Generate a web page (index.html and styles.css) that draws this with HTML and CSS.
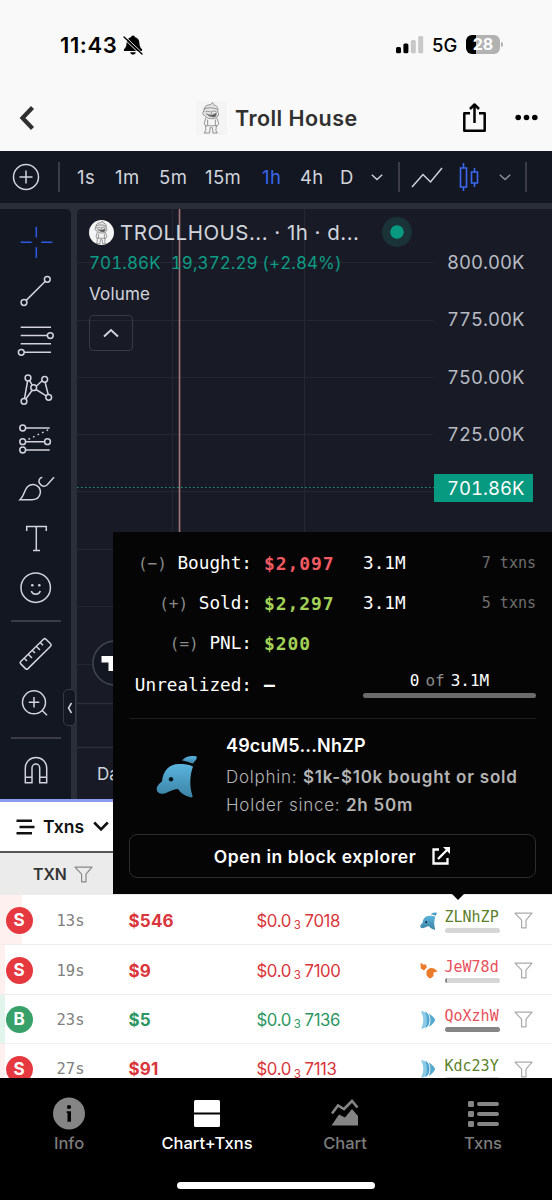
FILE: index.html
```html
<!DOCTYPE html>
<html lang="en">
<head>
    <meta charset="UTF-8">
    <meta name="viewport" content="width=device-width, initial-scale=1.0">
    <title>Troll House</title>
    <link rel="stylesheet" href="styles.css">
</head>
<body>

<!-- shared icons -->
<svg class="defs" width="0" height="0">
    <linearGradient id="sea" x1="0" y1="0" x2="0" y2="1">
        <stop offset="0" stop-color="#5ab4dd"/>
        <stop offset="1" stop-color="#3c82a5"/>
    </linearGradient>
    <symbol id="funnel" viewBox="0 0 19 17">
        <path d="M1 1.200H18L12 8.200V15.800H7.600V8.200Z" fill="none" stroke="currentColor" stroke-width="1.200" stroke-linejoin="round"/>
    </symbol>
    <symbol id="dolphin" viewBox="0 0 41 43">
        <path d="M.7 34.500C.5 31 3.500 28.500 6 26.500C7 16 13 9 23 9C28.500 9 33.500 9.500 37 11.500C33.500 21 33.500 32 36.500 40.500C36.800 42.500 35.500 43 33.500 42C28.500 40.500 24.500 38 22 34C16 34 11.500 38.500 6.500 38.700C3 38.800 .8 37 .7 34.500Z"/>
        <path d="M26 5.500C29 1.500 35 .3 40 1.300C41 1.800 41 3.200 40.200 4.500L37.500 8C36.500 9 34.500 8 33 7.300C31 6.300 28.500 6 26 5.500Z"/>
        <circle class="eye" cx="15" cy="24.300" r="2.200"/>
    </symbol>
    <symbol id="fish" viewBox="0 0 16 20">
        <path d="M1 1.500C4 .5 7 3 7.500 10C7 16.500 4.500 19 1 18.500C4 13 4 7 1 1.500Z" fill="#8ccbe6"/>
        <path d="M5 1.500C8.200 3 9.600 6 9.600 10C9.600 14 8 17 5 18.500C7.500 13 7.500 7 5 1.500Z" fill="#4fa6d2"/>
        <path d="M8.800 3.500C12 5.500 14.500 8 15.200 10C14 13 12 15 8.800 16.800C11 12 11 8 8.800 3.500Z" fill="#55a9cf"/>
    </symbol>
    <symbol id="shrimp" viewBox="0 0 18 17">
        <path d="M.5.5L3 2.500L6 2.500L6.800 5.500L4 8.500L.8 6.500Z" fill="#e97b2b"/>
        <path d="M6.500 9.500C8 5 14 4.500 17.500 9.500L13.500 10.500L13.500 14L10.500 16.500C7.500 15.500 5.800 13 6.500 9.500Z" fill="#e97b2b"/>
    </symbol>
    <symbol id="troll" viewBox="0 0 32 34">
        <g fill="none" stroke="currentColor" stroke-width=".8" stroke-linecap="round" stroke-linejoin="round">
            <path d="M8 10C8.500 5 11 3 15 3.500L17 1L19 4C22 4 23 7 22.500 11C24 13 23.500 15 21.500 16C18 19 12 18 9 14.500C6.500 14 6.500 11 8 10Z" fill="#e6e6e6"/>
            <path d="M8.500 7.500C12 6 18 6 22 8M10 10.500Q12 9 14 10.500M17 10Q19 9 21 10.500M15.500 10L16 12.500"/>
            <path d="M11 13Q16 15.500 21 12Q21 16 18 16Q14 16 11 13Z" fill="#555"/>
            <path d="M10 17L8.500 23L10 25H22L23.500 23L21.500 17M10 25V30L8.500 32.500H14L14.500 27H17L17.500 32.500H22L20.500 30L21 25"/>
            <path d="M12 19V24M20 19V24"/>
        </g>
    </symbol>
</svg>

<div class="phone">
    <div class="status-bar">
        <span class="clock">11:43</span>
        <svg class="bell" width="20" height="20" viewBox="0 0 20 20">
            <path d="M10 .5C8.700.5 8.300 1.300 8.200 2C5 3 3.700 5 3.600 8C3.500 11 2.800 12.500 1 14.300C.6 15 1 15.900 1.800 15.900H18.200C19 15.900 19.400 15 19 14.300C17.200 12.500 16.500 11 16.400 8C16.300 5 15 3 11.800 2C11.700 1.300 11.300.5 10 .5ZM7.200 17.200H12.800C12.400 20.300 7.600 20.300 7.200 17.200Z"/>
            <path d="M.2 3L17.800 20M1.800 1.200L19.600 18.200" stroke="#f9f9f9" stroke-width="1"/>
            <path d="M1 2L19 19" stroke="#000" stroke-width="1.400" stroke-linecap="round"/>
        </svg>
        <span class="spacer"></span>
        <svg class="signal" width="28" height="18" viewBox="0 0 28 18">
            <rect x="0" y="11" width="5" height="6.300" rx="1.500"/>
            <rect x="7.400" y="7.500" width="5" height="9.800" rx="1.500"/>
            <rect x="14.800" y="4" width="5" height="13.300" rx="1.500" fill="#c8c8c8"/>
            <rect x="22.200" y="0" width="5" height="17.300" rx="1.500" fill="#c8c8c8"/>
        </svg>
        <span class="network">5G</span>
        <span class="battery">28</span>
    </div>

    <header class="title-bar">
        <svg class="back" width="16" height="24" viewBox="0 0 16 24" fill="none" stroke="#2f2f2f" stroke-width="4.200">
            <path d="M13.500 1.500L3.500 12L13.500 22.500"/>
        </svg>
        <div class="title">
            <svg class="title-logo" width="31" height="34"><use href="#troll"/></svg>
            <h1>Troll House</h1>
        </div>
        <svg class="share" width="25" height="31" viewBox="0 0 25 31" fill="none" stroke="#000" stroke-width="2.500" stroke-linejoin="round">
            <path d="M8 11.300H2.300V28.700H22.700V11.300H17M12.500 21V3M8 7L12.500 2.500L17 7"/>
        </svg>
        <svg class="dots" width="23" height="7" viewBox="0 0 23 7">
            <circle cx="3.200" cy="3.500" r="2.800"/><circle cx="11.500" cy="3.500" r="2.800"/><circle cx="19.800" cy="3.500" r="2.800"/>
        </svg>
    </header>

    <section class="chart">
        <div class="intervals">
            <svg width="28" height="28" viewBox="0 0 28 28" fill="none" stroke="#d1d4dc" stroke-width="1.500">
                <circle cx="14" cy="14" r="12.500"/><path d="M14 7.500V20.500M7.500 14H20.500"/>
            </svg>
            <i></i>
            <span>1s</span>
            <span>1m</span>
            <span>5m</span>
            <span>15m</span>
            <span class="active">1h</span>
            <span>4h</span>
            <span>D</span>
            <svg width="12" height="7" viewBox="0 0 12 7" fill="none" stroke="#d1d4dc" stroke-width="1.400"><path d="M.8.8L6 5.500L11.200.8"/></svg>
            <i></i>
            <svg width="32" height="22" viewBox="0 0 32 22" fill="none" stroke="#d1d4dc" stroke-width="1.500"><path d="M1 21L12 8.500L19.500 16L31 2"/></svg>
            <svg width="22" height="30" viewBox="0 0 22 30" fill="none" stroke="#3a67f0" stroke-width="1.600">
                <path d="M2.500 6H8.500V25H2.500ZM5.500 1V6M5.500 25V29M13.500 10H19.500V21H13.500ZM16.500 6V10M16.500 21V25"/>
            </svg>
            <svg width="12" height="7" viewBox="0 0 12 7" fill="none" stroke="#8d9098" stroke-width="1.400"><path d="M.8.8L6 5.500L11.200.8"/></svg>
            <i></i>
        </div>

        <div class="workspace">
            <div class="tools">
                <svg class="cross" viewBox="0 0 40 40"><path d="M4.700 20.300H15.700M25.300 20.300H36.300M20.300 4.700V15.500M20.300 25.300V36"/></svg>
                <svg viewBox="0 0 40 40"><path d="M10.200 29.400L29.100 10.500"/><circle cx="8" cy="31.500" r="2.900"/><circle cx="31.300" cy="8.300" r="2.900"/></svg>
                <svg viewBox="0 0 40 40"><path d="M4.700 6.300H35M4.700 14.600H31.400M4.700 22.700H35M8.300 31.300H35"/><circle cx="34.300" cy="14.600" r="2.900"/><circle cx="5.300" cy="31.300" r="2.900"/></svg>
                <svg viewBox="0 0 40 40"><path d="M8.500 28.500L11.600 11M13.500 10.500L16.300 15.200M20.200 16.200L26.200 10.800M29.100 12.200L32.200 24.500M9.800 29L16.200 20.200M20 19.500L30.200 25.800"/><circle cx="12" cy="8" r="2.900"/><circle cx="28.700" cy="9.300" r="2.900"/><circle cx="17.700" cy="17.700" r="2.900"/><circle cx="8" cy="31.300" r="2.900"/><circle cx="32.700" cy="27.300" r="2.900"/></svg>
                <svg viewBox="0 0 40 40"><path d="M9.600 9H33.700M9.600 22.700H28.600M9.600 31H33.700"/><path d="M12.500 20.200L33 10.500" stroke-dasharray="1.700 3.300"/><circle cx="6.700" cy="9" r="2.900"/><circle cx="6.700" cy="22.700" r="2.900"/><circle cx="31.500" cy="22.700" r="2.900"/><circle cx="6.700" cy="31" r="2.900"/></svg>
                <svg viewBox="0 0 40 40"><path d="M4 31.700C9 27 8 22 11.500 18.800C15 15.500 20 15.800 23 19.500C26 24 24 31.700 16 31.700ZM26.300 9.300C23 10 22.300 13 23.500 15.200C25.500 18 28 19.500 31 17L38 9.300"/></svg>
                <svg viewBox="0 0 40 40"><path d="M10.700 13V8.500H30.300V13M20.300 8.500V32.500M17 32.500H24"/></svg>
                <svg viewBox="0 0 40 40"><circle cx="19.700" cy="20.700" r="14.700"/><path d="M15.300 24C16.500 28.200 23 28.200 24.300 24"/><circle class="dot" cx="16.300" cy="18.300" r="1.300"/><circle class="dot" cx="23.300" cy="18.300" r="1.300"/></svg>
                <hr>
                <svg viewBox="0 0 40 40"><path d="M27.500 5.200Q28.700 4 30 5.200L34.600 9.800Q35.800 11 34.600 12.300L12 34.600Q10.700 35.800 9.500 34.600L4.800 29.900Q3.600 28.700 4.800 27.500ZM8.200 24.200L11 27M12.200 20.200L16 24M16.200 16.300L19 19M20.200 12.300L24 16M24.200 8.500L27 11.300"/></svg>
                <svg viewBox="0 0 40 40"><circle cx="18" cy="18.300" r="11.500"/><path d="M18 13V23.600M12.700 18.300H23.300M26.200 26.500L31 31.300"/></svg>
                <hr>
                <svg viewBox="0 0 40 40"><path d="M9.300 31.800V17A10.700 10.500 0 0 1 30.700 17V31.800H23.700V17A3.850 4 0 0 0 16 17V31.800ZM9.300 26.200H16M23.700 26.200H30.700"/></svg>
            </div>
            <div class="collapse">
                <svg width="6" height="12" viewBox="0 0 6 12" fill="none" stroke="#d1d4dc" stroke-width="1.500"><path d="M4.500 1L1.500 6L4.500 11"/></svg>
            </div>

            <div class="pane">
                <svg class="plot" width="475" height="590" viewBox="0 0 475 590" fill="none">
                    <path d="M0 53.500H356M0 111.500H356M0 168.500H356M0 225.500H356M0 282.500H356M0 340.500H356M0 397.500H356M0 455.500H356M95.500 0V495M227.500 0V495" stroke="#242833"/>
                    <path d="M0 494.500H475M0 538.500H475" stroke="#2a2e39" stroke-width="1.500"/>
                    <path d="M102.500 0V495" stroke="#a5757b" stroke-width="1.600"/>
                    <path d="M0 278.500H357" stroke="#16917f" stroke-width="1.200" stroke-dasharray="1.600 2.400"/>
                    <circle cx="38" cy="454" r="22" stroke="#434651" stroke-width="1.500" fill="#131722"/>
                    <path d="M24.500 447H40V462H31.500V453.500H24.500Z" fill="#fff"/>
                </svg>
                <div class="legend">
                    <div class="symbol-line">
                        <svg class="coin" width="25" height="25" viewBox="0 0 25 25"><use href="#troll" x="1" y="0" width="23" height="25"/></svg>
                        <span class="symbol">TROLLHOUS... · 1h · d...</span>
                        <span class="live"></span>
                    </div>
                    <div class="change"><span>701.86K</span><span>19,372.29 (+2.84%)</span></div>
                    <div class="volume">Volume</div>
                    <div class="fold">
                        <svg width="16" height="10" viewBox="0 0 16 10" fill="none" stroke="#d1d4dc" stroke-width="2"><path d="M1 8.500L8 2L15 8.500"/></svg>
                    </div>
                </div>
                <div class="prices">
                    <span>800.00K</span>
                    <span>775.00K</span>
                    <span>750.00K</span>
                    <span>725.00K</span>
                    <span class="last">701.86K</span>
                </div>
                <span class="range">Date Range</span>
            </div>
        </div>
    </section>

    <section class="txns">
        <div class="tabs">
            <svg width="19" height="16" viewBox="0 0 19 16" stroke="#111" stroke-width="2.600"><path d="M.5 1.700H16M3.500 8H18.500M.5 14.300H16"/></svg>
            <span>Txns</span>
            <svg width="16" height="11" viewBox="0 0 16 11" fill="none" stroke="#111" stroke-width="2.600"><path d="M1.200 1.500L8 8.500L14.800 1.500"/></svg>
        </div>
        <div class="head">
            <span>TXN</span>
            <svg width="19" height="17"><use href="#funnel"/></svg>
        </div>
        <div class="rows">
            <div class="row sell big">
                <b class="side">S</b><span class="age">13s</span><b class="usd">$546</b>
                <span class="price">$0.0<sub>3</sub>7018</span>
                <svg class="kind" width="17" height="18"><use href="#dolphin"/></svg>
                <span class="wallet up">ZLNhZP<i class="bar"></i></span>
                <svg class="filter" width="19" height="17"><use href="#funnel"/></svg>
            </div>
            <div class="row sell">
                <b class="side">S</b><span class="age">19s</span><b class="usd">$9</b>
                <span class="price">$0.0<sub>3</sub>7100</span>
                <svg class="kind" width="18" height="17"><use href="#shrimp"/></svg>
                <span class="wallet down">JeW78d<i class="bar"><i style="width: 4%"></i></i></span>
                <svg class="filter" width="19" height="17"><use href="#funnel"/></svg>
            </div>
            <div class="row buy">
                <b class="side">B</b><span class="age">23s</span><b class="usd">$5</b>
                <span class="price">$0.0<sub>3</sub>7136</span>
                <svg class="kind" width="16" height="20"><use href="#fish"/></svg>
                <span class="wallet down">QoXzhW<i class="bar"><i style="width: 100%"></i></i></span>
                <svg class="filter" width="19" height="17"><use href="#funnel"/></svg>
            </div>
            <div class="row sell">
                <b class="side">S</b><span class="age">27s</span><b class="usd">$91</b>
                <span class="price">$0.0<sub>3</sub>7113</span>
                <svg class="kind" width="16" height="20"><use href="#fish"/></svg>
                <span class="wallet up">Kdc23Y<i class="bar"></i></span>
                <svg class="filter" width="19" height="17"><use href="#funnel"/></svg>
            </div>
        </div>
    </section>

    <nav class="bottom-nav">
        <div class="item">
            <svg width="32" height="33" viewBox="0 0 32 33"><circle cx="16" cy="16.500" r="16" fill="#858585"/><circle cx="16" cy="10" r="2.100"/><path d="M13.700 14.200H18V24.700H14.500V16H13.700Z"/></svg>
            <span>Info</span>
        </div>
        <div class="item active">
            <svg width="32" height="33" viewBox="0 0 32 33" fill="#fff"><path d="M4.500 3H27.500Q29 3 29 4.500V15.500H3V4.500Q3 3 4.500 3ZM3 17.500H29V28.500Q29 30 27.500 30H4.500Q3 30 3 28.500Z"/></svg>
            <span>Chart+Txns</span>
        </div>
        <div class="item">
            <svg width="32" height="33" viewBox="0 0 32 33" fill="#858585"><path d="M2.500 28.500L10 17.500L16 20.500L23 12L29 19V28.500Z"/><path d="M3 17.500L9 9.500L15 13L23 4.500L28.500 11.500" fill="none" stroke="#000" stroke-width="5"/><path d="M3 16.500L9 8.500L15 12L23 4L28.500 10.500" fill="none" stroke="#858585" stroke-width="2.600"/></svg>
            <span>Chart</span>
        </div>
        <div class="item">
            <svg width="32" height="33" viewBox="0 0 32 33" fill="#858585"><rect x="1" y="4" width="6" height="6" rx="1.200"/><rect x="1" y="14" width="6" height="6" rx="1.200"/><rect x="1" y="24" width="6" height="6" rx="1.200"/><rect x="10" y="5" width="22" height="4" rx="2"/><rect x="10" y="15" width="22" height="4" rx="2"/><rect x="10" y="25" width="22" height="4" rx="2"/></svg>
            <span>Txns</span>
        </div>
        <div class="home"></div>
    </nav>

    <div class="wallet-card">
        <div class="stats">
            <span class="label"><em>(−)</em> Bought:</span><b class="loss">$2,097</b><span>3.1M</span><small>7 txns</small>
            <span class="label"><em>(+)</em> Sold:</span><b class="gain">$2,297</b><span>3.1M</span><small>5 txns</small>
            <span class="label"><em>(=)</em> PNL:</span><b class="gain">$200</b><span></span><small></small>
            <span class="label">Unrealized:</span><b>–</b>
            <div class="held">
                <div>0<em>of</em>3.1M</div>
                <div class="held-bar"></div>
            </div>
        </div>
        <div class="who">
            <svg width="41" height="43"><use href="#dolphin"/></svg>
            <div>
                <h2>49cuM5...NhZP</h2>
                <p>Dolphin: <b>$1k-$10k bought or sold</b></p>
                <p>Holder since: <b>2h 50m</b></p>
            </div>
        </div>
        <div class="explorer">
            <span>Open in block explorer</span>
            <svg width="20" height="20" viewBox="0 0 20 20" fill="none" stroke="#fff" stroke-width="2.300"><path d="M8 3.500H2.500V17.500H16.500V12M7 13L17 3"/><path d="M12 1H19V8Z" fill="#fff" stroke="none"/></svg>
        </div>
    </div>
</div>

</body>
</html>
```
FILE: styles.css
```css
* {
    box-sizing: border-box;
}
body {
    margin: 0;
    font-family: Inter, "Liberation Sans", sans-serif;
    background: #f9f9f9;
}
svg {
    display: block;
    flex: none;
}
.defs {
    position: absolute;
}
.phone {
    position: relative;
    width: 552px;
    height: 1200px;
    overflow: hidden;
    display: flex;
    flex-direction: column;
}

/* status bar and title */
.status-bar {
    display: flex;
    align-items: center;
    height: 88px;
    padding: 1px 52px 0 60px;
}
.clock {
    width: 63px;
    font-size: 22px;
    font-weight: 600;
    letter-spacing: .6px;
}
.spacer {
    flex: 1;
}
.network {
    width: 34px;
    margin-left: 8px;
    font-size: 18.5px;
    font-weight: 500;
}
.battery {
    position: relative;
    width: 34px;
    height: 19px;
    border-radius: 6px;
    background: linear-gradient(90deg, #000 28%, #b2b2b2 28%);
    color: #fff;
    font-size: 16px;
    font-weight: 700;
    line-height: 19px;
    text-align: center;
}
.battery::after {
    content: "";
    position: absolute;
    right: -3px;
    top: 7px;
    width: 2px;
    height: 5px;
    border-radius: 0 2px 2px 0;
    background: #b2b2b2;
}
.title-bar {
    display: flex;
    align-items: center;
    height: 63px;
    padding: 0 14px 4px 19px;
}
.title {
    display: flex;
    align-items: center;
    margin-left: 161px;
    gap: 8px;
    flex: 1;
}
.title-logo {
    background: #f4f4f4;
    color: #777;
}
h1 {
    margin: 0;
    font-size: 21.5px;
    font-weight: 600;
    letter-spacing: .45px;
    color: #303030;
}
.share {
    margin-right: 28px;
}

/* chart */
.chart {
    height: 648px;
    background: #2a2e39;
    color: #d1d4dc;
}
.intervals {
    display: grid;
    grid-template-columns: 46px 19px 38px 44px 46px 57px 38px 40px 31px 27px 13px 47px 41px 26px 1px;
    align-items: center;
    height: 52px;
    padding-left: 12px;
    background: #131722;
    font-size: 18.5px;
    letter-spacing: .4px;
}
.intervals i {
    width: 1.5px;
    height: 30px;
    background: #3a3d48;
}
.active {
    color: #3a67f0;
}
.workspace {
    position: relative;
    display: flex;
    gap: 6px;
    height: 596px;
    padding-top: 6px;
}
.tools {
    display: flex;
    flex-direction: column;
    width: 71px;
    padding: 13px 0 0 16px;
    background: #131722;
    border-radius: 0 5px 0 0;
}
.tools svg {
    width: 40px;
    height: 40px;
    margin-bottom: 9.3px;
    fill: none;
    stroke: #d1d4dc;
    stroke-width: 1.5;
}
.tools .cross {
    stroke: #2e5be6;
}
.tools .dot {
    fill: #d1d4dc;
    stroke: none;
}
.tools hr {
    flex: none;
    width: 50px;
    height: 2px;
    margin: 4px 0 12px -5px;
    border: 0;
    background: #3a3d48;
}
.collapse {
    position: absolute;
    left: 63px;
    top: 486px;
    width: 13px;
    height: 37px;
    display: flex;
    align-items: center;
    justify-content: center;
    background: #131722;
    border: 1.5px solid #363a45;
    border-radius: 5px;
}
.pane {
    position: relative;
    flex: 1;
    display: flex;
    background: #181b26;
    border-radius: 5px 0 0 0;
}
.plot {
    position: absolute;
    left: 0;
    top: 0;
}
.legend {
    position: relative;
    width: 357px;
    padding: 8px 0 0 12px;
}
.symbol-line {
    display: flex;
    align-items: center;
    height: 30px;
}
.coin {
    border-radius: 50%;
    background: #f4f4f4;
    color: #555;
}
.symbol {
    width: 262px;
    margin-left: 6px;
    font-size: 20.5px;
    letter-spacing: .48px;
    white-space: nowrap;
}
.live {
    flex: none;
    width: 30px;
    height: 30px;
    border: 8px solid #1a3338;
    border-radius: 50%;
    background: #089981;
    background-clip: padding-box;
}
.change {
    display: flex;
    gap: 10px;
    height: 32px;
    line-height: 32px;
    font-size: 17px;
    font-variant-numeric: tabular-nums;
    letter-spacing: .08px;
    color: #0e9c85;
    white-space: nowrap;
}
.volume {
    height: 30px;
    line-height: 30px;
    font-size: 17px;
    letter-spacing: .2px;
}
.fold {
    display: flex;
    align-items: center;
    justify-content: center;
    width: 44px;
    height: 36px;
    margin-top: 6px;
    border: 1.5px solid #363a45;
    border-radius: 4px;
}
.prices {
    position: relative;
    padding-top: 25px;
    font-size: 18.5px;
    font-variant-numeric: tabular-nums;
    color: #b8bbc4;
}
.prices span {
    display: block;
    height: 57.4px;
    line-height: 57.4px;
    padding-left: 13px;
}
.prices .last {
    width: 99px;
    height: 28px;
    margin-top: 10px;
    line-height: 28px;
    background: #089981;
    color: #fff;
}
.range {
    position: absolute;
    left: 20px;
    top: 555px;
    font-size: 17px;
}

/* transactions */
.txns {
    height: 279px;
    overflow: hidden;
    background: #fff;
    border-top: 3px solid #8c9bf2;
}
.tabs {
    display: flex;
    align-items: center;
    height: 49px;
    padding-left: 16px;
    font-size: 17.5px;
    font-weight: 600;
    color: #111;
}
.tabs span {
    width: 50px;
    margin-left: 8px;
}
.head {
    display: flex;
    align-items: center;
    gap: 7px;
    height: 44px;
    padding-left: 33px;
    background: #ebebeb;
    border-top: 2px solid #555;
    font-size: 15.8px;
    font-weight: 600;
    color: #333;
}
.head svg {
    color: #888;
}
.row {
    display: grid;
    grid-template-columns: 51px 72px 128px 163px 25px 69px 19px;
    align-items: center;
    height: 49.4px;
    padding: 2px 0 0 5.5px;
    border-bottom: 1px solid #f2eded;
    font-size: 17px;
}
.row:first-child {
    height: 50.4px;
}
.sell {
    color: #d9353a;
    background: linear-gradient(90deg, #fff0f0 5px, #fff 5px);
}
.sell.big {
    background: linear-gradient(90deg, #fff0f0 22px, #fff 22px);
}
.buy {
    color: #2c9763;
    background: linear-gradient(90deg, #e2f5ec 5px, #fff 5px);
}
.side {
    width: 27px;
    height: 27px;
    border-radius: 50%;
    background: #e5393f;
    color: #fff;
    line-height: 27px;
    text-align: center;
}
.buy .side {
    background: #38a169;
}
.usd {
    letter-spacing: .2px;
}
.age {
    font-family: "DejaVu Sans Mono", monospace;
    font-size: 15.5px;
    color: #808080;
}
.price {
    font-size: 16.8px;
    line-height: 20px;
    letter-spacing: -.4px;
}
.price sub {
    margin: 0 4px 0 3px;
    font-size: 11.5px;
    line-height: 0;
    vertical-align: -2.5px;
}
.kind {
    fill: url(#sea);
}
.eye {
    fill: #06141c;
}
.wallet {
    width: 55px;
    font-family: "DejaVu Sans Mono", monospace;
    font-size: 15px;
    line-height: 18px;
}
.up {
    color: #5c7f2a;
}
.down {
    color: #e8505b;
}
.bar {
    display: block;
    height: 5px;
    margin-top: 2px;
    border-radius: 3px;
    background: #d6d6d6;
    overflow: hidden;
}
.bar i {
    display: block;
    height: 5px;
    background: #858585;
}
.filter {
    color: #aaa;
}

/* bottom navigation */
.bottom-nav {
    position: relative;
    display: flex;
    height: 122px;
    background: #000;
}
.item {
    width: 138px;
    padding-top: 19px;
    display: flex;
    flex-direction: column;
    align-items: center;
    gap: 3px;
    font-size: 16.5px;
    font-weight: 500;
    color: #7c7c7c;
}
.item.active {
    color: #fff;
}
.home {
    position: absolute;
    left: 177px;
    bottom: 11px;
    width: 198px;
    height: 7px;
    border-radius: 4px;
    background: #fff;
}

/* wallet popover */
.wallet-card {
    position: absolute;
    left: 113px;
    top: 532px;
    width: 439px;
    height: 362px;
    padding: 11px 16px 0;
    background: #050505;
    color: #fff;
}
.wallet-card::after {
    content: "";
    position: absolute;
    left: 338px;
    top: 361px;
    border: 7px solid transparent;
    border-top-color: #050505;
    border-bottom: 0;
}
.stats {
    display: grid;
    grid-template-columns: 123px 87px 1fr 60px;
    grid-template-rows: 40px 40px 40px 43px;
    column-gap: 12px;
    align-items: center;
    height: 176px;
    border-bottom: 1px solid #1e1e1e;
    font-family: "DejaVu Sans Mono", monospace;
    font-size: 17.7px;
}
.stats em {
    font-style: normal;
    color: #8a8a8a;
}
.label {
    text-align: right;
    white-space: nowrap;
}
.label em {
    font-size: 16px;
}
.stats b {
    font-size: 18px;
    letter-spacing: .9px;
}
.loss {
    color: #f25a62;
}
.gain {
    color: #a3d157;
}
.stats small {
    font-size: 15px;
    text-align: right;
    white-space: nowrap;
    color: #6e6e6e;
}
.held {
    grid-column: 3 / 5;
    font-size: 16px;
    text-align: center;
}
.held em {
    margin: 0 6px;
}
.held-bar {
    height: 5px;
    margin-top: 3px;
    border-radius: 3px;
    background: #6b6b6b;
}
.who {
    display: flex;
    align-items: center;
    gap: 29px;
    height: 115px;
    padding-left: 27px;
    fill: url(#sea);
}
h2 {
    margin: -3px 0 2px;
    font-size: 18px;
    line-height: 30px;
    font-weight: 600;
    letter-spacing: .15px;
}
.who p {
    margin: 0;
    font-size: 17px;
    line-height: 28.5px;
    font-weight: 300;
    letter-spacing: .76px;
    color: #b4b4b4;
    white-space: nowrap;
}
.who b {
    font-weight: 600;
}
.explorer {
    display: flex;
    align-items: center;
    justify-content: center;
    gap: 15px;
    height: 44px;
    border: 1px solid #2c2c2c;
    border-radius: 8px;
    font-size: 17.5px;
    font-weight: 600;
    letter-spacing: .55px;
}
```
